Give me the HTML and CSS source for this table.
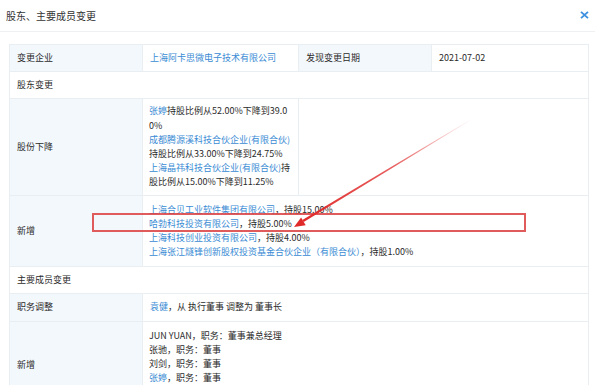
FILE: index.html
```html
<!DOCTYPE html>
<html lang="zh">
<head>
<meta charset="utf-8">
<title>股东、主要成员变更</title>
<link rel="stylesheet" href="styles.css">
</head>
<body>
<div class="dialog">
  <div class="header">
    <span class="title">股东、主要成员变更</span>
    <svg class="close" width="9" height="8" viewBox="0 0 9 8"><path d="M1 0.8 L8 7.2 M8 0.8 L1 7.2" stroke="#3d8fdf" stroke-width="1.8" fill="none"/></svg>
  </div>
  <table class="info">
    <colgroup><col class="c1"><col class="c2"><col class="c3"><col class="c4"></colgroup>
    <tr>
      <th>变更企业</th>
      <td><a class="link">上海阿卡思微电子技术有限公司</a></td>
      <th>发现变更日期</th>
      <td>2021-07-02</td>
    </tr>
    <tr><td colspan="4">股东变更</td></tr>
    <tr>
      <th>股份下降</th>
      <td class="narrow">
        <div class="entry"><a class="link">张婷</a>持股比例从52.00%下降到39.0<br>0%</div>
        <div class="entry"><a class="link">成都腾源溪科技合伙企业(有限合伙)</a><br>持股比例从33.00%下降到24.75%</div>
        <div class="entry"><a class="link">上海晶祎科技合伙企业(有限合伙)</a>持<br>股比例从15.00%下降到11.25%</div>
      </td>
      <td colspan="2"></td>
    </tr>
    <tr>
      <th>新增</th>
      <td colspan="3" class="multi">
        <div class="entry"><a class="link">上海合贝工业软件集团有限公司</a>，持股15.00%</div>
        <div class="entry"><a class="link">哈勃科技投资有限公司</a>，持股5.00%</div>
        <div class="entry"><a class="link">上海科技创业投资有限公司</a>，持股4.00%</div>
        <div class="entry"><a class="link">上海张江燧锋创新股权投资基金合伙企业（有限合伙）</a>，持股1.00%</div>
      </td>
    </tr>
    <tr><td colspan="4" class="short">主要成员变更</td></tr>
    <tr>
      <th class="tall">职务调整</th>
      <td colspan="3" class="tall"><a class="link">袁健</a>，从 执行董事 调整为 董事长</td>
    </tr>
    <tr>
      <th class="top">新增</th>
      <td colspan="3" class="multi top">
        <div class="entry">JUN YUAN，职务：董事兼总经理</div>
        <div class="entry">张驰，职务：董事</div>
        <div class="entry">刘剑，职务：董事</div>
        <div class="entry"><a class="link">张婷</a>，职务：董事</div>
      </td>
    </tr>
  </table>
  <div class="highlight"></div>
  <svg class="arrow" width="595" height="385" viewBox="0 0 595 385">
    <defs>
      <linearGradient id="fade" gradientUnits="userSpaceOnUse" x1="472" y1="119" x2="300" y2="223">
        <stop offset="0" stop-color="#e02a2a" stop-opacity="0"/>
        <stop offset="0.45" stop-color="#e02a2a" stop-opacity="0.75"/>
        <stop offset="1" stop-color="#e02a2a" stop-opacity="1"/>
      </linearGradient>
    </defs>
    <polygon points="472.2,119.3 471.8,118.7 302.3,219.9 303.7,222.1" fill="url(#fade)"/>
    <polygon points="294,227 305.7,225.2 301.1,217.5" fill="#e02a2a"/>
  </svg>
</div>
</body>
</html>
```
FILE: styles.css
```css
* { box-sizing: border-box; }
body {
  margin: 0;
  background: #fff;
  color: #2b2b2b;
  font-family: "Noto Sans CJK SC", "Microsoft YaHei", sans-serif;
}
.dialog {
  position: relative;
  width: 595px;
  height: 385px;
  overflow: hidden;
}
.header {
  height: 32px;
  border-bottom: 1px solid #eef0f2;
  display: flex;
  align-items: center;
  justify-content: space-between;
  padding: 0 6px 0 6px;
}
.title {
  font-size: 10px;
  color: #333;
}
.close { display: block; margin-top: -1px; }
.info {
  margin: 12px 0 0 9px;
  width: 579px;
  border-collapse: collapse;
  table-layout: fixed;
  font-size: 9px;
  line-height: 14.2px;
}
.c1 { width: 133px; }
.c2 { width: 156px; }
.c3 { width: 133px; }
.c4 { width: 157px; }
.info th, .info td {
  border: 1px solid #e9eef3;
  padding: 6px 6px 6px 7px;
  text-align: left;
  font-weight: normal;
  vertical-align: middle;
}
.info th { background: #f3f8fd; }
.info td.narrow {
  padding: 5px 1px 5px 6px;
  white-space: nowrap;
}
.info td.multi {
  padding: 7px 6px 7px 6px;
  white-space: nowrap;
}
.info td.short { padding-top: 5.5px; padding-bottom: 5.5px; }
.info .tall { padding-top: 6.5px; padding-bottom: 6.5px; }
.info td.top { padding-top: 7px; vertical-align: top; }
.info th.top { padding-top: 36px; vertical-align: top; }
.link { color: #3a8bd4; text-decoration: none; }
.highlight {
  position: absolute;
  left: 92px;
  top: 213px;
  width: 434px;
  height: 19px;
  border: 2px solid rgba(218, 64, 64, 0.85);
}
.arrow {
  position: absolute;
  left: 0;
  top: 0;
  pointer-events: none;
}
```
